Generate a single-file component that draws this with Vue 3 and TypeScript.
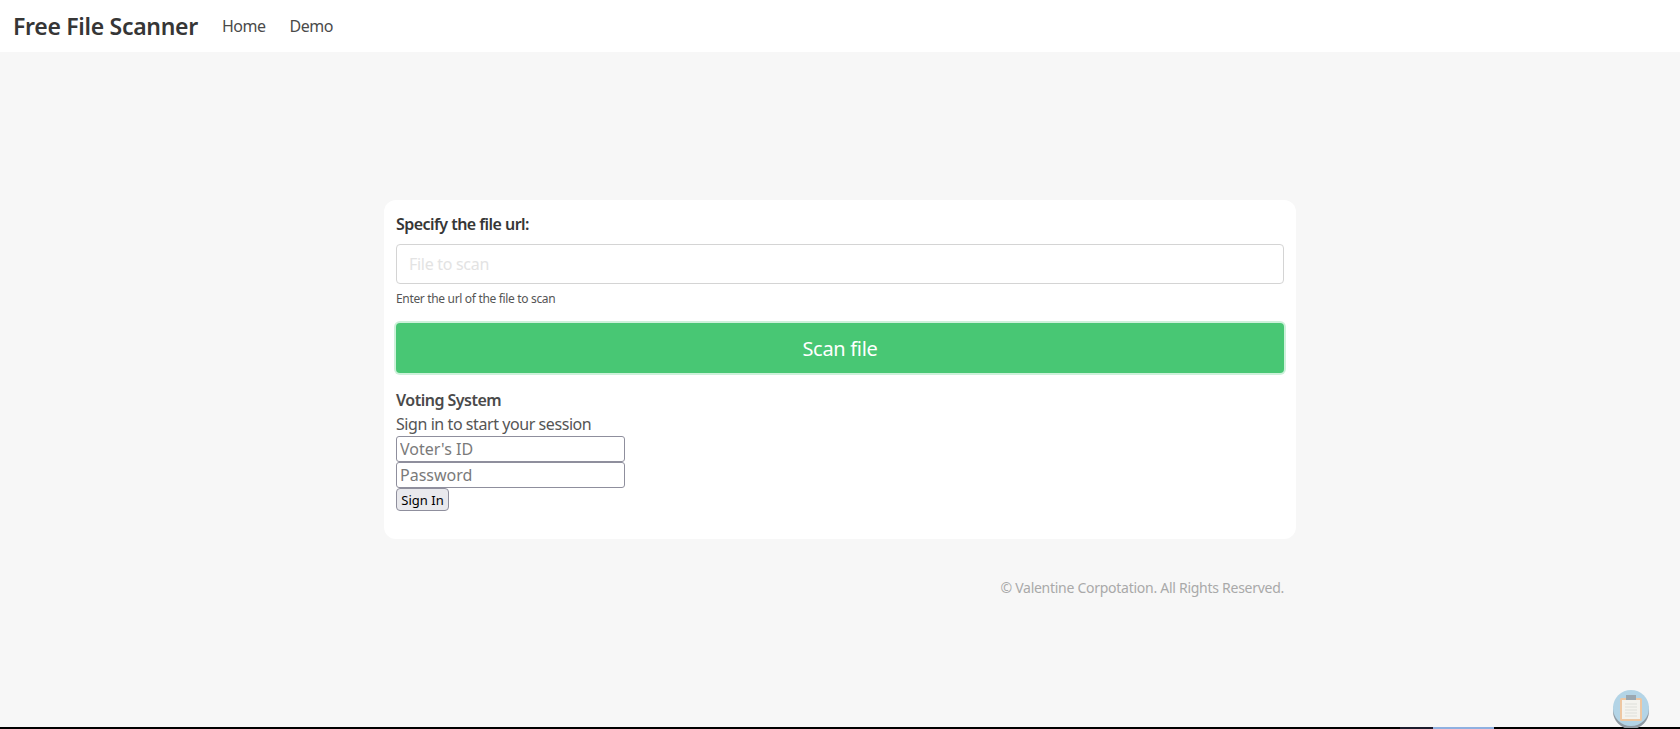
<script setup lang="ts">
const navLinks: string[] = ['Home', 'Demo']
</script>

<template>
  <div class="page">
    <nav class="navbar">
      <span class="brand">Free File Scanner</span>
      <a v-for="link in navLinks" :key="link" class="nav-link">{{ link }}</a>
    </nav>
    <main class="container">
      <section class="card">
        <label class="label">Specify the file url:</label>
        <input class="control" type="text" placeholder="File to scan" />
        <p class="help">Enter the url of the file to scan</p>
        <button class="scan" type="button">Scan file</button>
        <div class="voting">
          <h3 class="voting-title">Voting System</h3>
          <p class="voting-sub">Sign in to start your session</p>
          <input class="plain" type="text" placeholder="Voter's ID" />
          <input class="plain" type="password" placeholder="Password" />
          <button class="signin" type="button">Sign In</button>
        </div>
      </section>
      <footer class="footer">© Valentine Corpotation. All Rights Reserved.</footer>
    </main>
    <div class="dock">
      <span class="dock-dark"></span>
      <span class="dock-active"></span>
    </div>
    <svg class="clip" width="38" height="38" viewBox="0 0 38 38" aria-hidden="true">
      <circle cx="19" cy="21" r="18" fill="#8f9aa3" />
      <circle cx="19" cy="18" r="18" fill="#b3d4e6" />
      <rect x="8" y="8" width="22" height="23" rx="1.5" fill="#eec7a2" />
      <rect x="10" y="10" width="18" height="19" fill="#f4f3ee" />
      <rect x="14" y="5" width="10" height="5" fill="#9aa7b0" />
      <path d="M13 14h12M13 17h12M13 20h12M13 23h12M13 26h12" stroke="#dedfda" stroke-width="1" />
    </svg>
  </div>
</template>

<style>
html, body { margin: 0; background: #f7f7f7; }
</style>

<style scoped>
.page {
  height: 729px;
  overflow: hidden;
  background: #f7f7f7;
  font-family: "Noto Sans", "Open Sans", sans-serif;
  color: #4a4a4a;
  position: relative;
}
.navbar {
  height: 52px;
  background: #fff;
  display: flex;
  align-items: center;
  padding-left: 13px;
}
.brand {
  font-size: 23px;
  font-weight: 600;
  letter-spacing: -0.3px;
  color: #363636;
  margin-right: 12px;
}
.nav-link {
  font-size: 16px;
  letter-spacing: -0.5px;
  color: #4a4a4a;
  padding: 0 12px;
}
.container {
  width: 912px;
  margin: 148px auto 0;
}
.card {
  box-sizing: border-box;
  height: 339px;
  background: #fff;
  border-radius: 12px;
  padding: 14px 12px 0;
  display: flex;
  flex-direction: column;
  align-items: flex-start;
}
.label {
  font-size: 16px;
  font-weight: 600;
  letter-spacing: -0.55px;
  color: #363636;
  line-height: 20px;
  margin-bottom: 10px;
}
.control {
  box-sizing: border-box;
  width: 100%;
  height: 40px;
  border: 1px solid #d4d4d4;
  border-radius: 4px;
  padding: 0 12px;
  font: inherit;
  font-size: 16px;
  letter-spacing: -0.3px;
  background: #fff;
}
.control::placeholder { color: #e3e3e3; }
.help {
  margin: 6px 0 0;
  font-size: 12px;
  letter-spacing: -0.33px;
  line-height: 18px;
  color: #555;
}
.scan {
  width: 100%;
  height: 50px;
  margin-top: 15px;
  border: 0;
  border-radius: 4px;
  background: #48c774;
  box-shadow: 0 0 0 2px #cdf1da;
  color: #fff;
  font: inherit;
  font-size: 20px;
  letter-spacing: -0.3px;
}
.voting {
  margin-top: 15px;
  display: flex;
  flex-direction: column;
  align-items: flex-start;
}
.voting-title {
  margin: 0;
  font-size: 16px;
  font-weight: 600;
  letter-spacing: -0.5px;
  line-height: 24px;
  color: #4a4a4a;
}
.voting-sub {
  margin: 0;
  font-size: 16px;
  letter-spacing: -0.43px;
  line-height: 24px;
  color: #555;
}
.plain {
  box-sizing: border-box;
  width: 229px;
  height: 26px;
  border: 1px solid #8f8f9d;
  border-radius: 3px;
  padding: 1px 3px;
  font: inherit;
  font-size: 16px;
  background: #fff;
}
.plain::placeholder { color: #7a7a7a; }
.signin {
  box-sizing: border-box;
  width: 53px;
  height: 23px;
  padding: 0;
  border: 1px solid #8f8f9d;
  border-radius: 4px;
  background: #e9e9ed;
  color: #000;
  font: inherit;
  font-size: 13px;
}
.footer {
  margin-top: 39px;
  padding-right: 12px;
  text-align: right;
  font-size: 14px;
  letter-spacing: -0.27px;
  line-height: 20px;
  color: #a9a9a9;
}
.dock {
  position: absolute;
  left: 0;
  right: 0;
  bottom: 0;
  height: 2px;
  background: #000;
}
.dock-dark {
  position: absolute;
  left: 1400px;
  width: 33px;
  top: 0;
  bottom: 0;
  background: #1c1c2c;
}
.dock-active {
  position: absolute;
  left: 1433px;
  width: 61px;
  top: 0;
  bottom: 0;
  background: #8fb0e0;
}
.clip {
  position: absolute;
  left: 1612px;
  top: 690px;
}
</style>
